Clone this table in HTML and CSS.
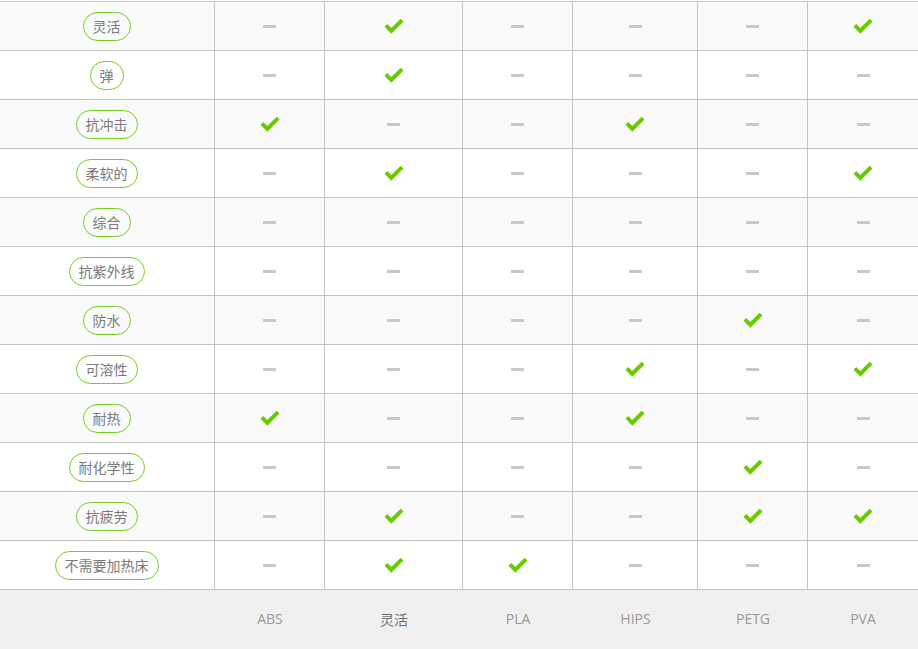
FILE: index.html
```html
<!DOCTYPE html>
<html lang="zh">
<head>
<meta charset="utf-8">
<link rel="stylesheet" href="styles.css">
<title>材料对比</title>
</head>
<body>
<svg width="0" height="0" class="defs">
  <defs>
    <symbol id="chk" viewBox="0 0 20 15">
      <path d="M0.5 7.8 L3.3 5 L7.3 9 L16.7 -0.3 L19.5 2.5 L7.3 14.7 Z" fill="#66cc00"/>
    </symbol>
  </defs>
</svg>
<div class="table" id="t"></div>
<script src="app.js"></script>
</body>
</html>
```

FILE: app.js
```js
const rows = [
  ["灵活", "-y---y"],
  ["弹", "-y----"],
  ["抗冲击", "y--y--"],
  ["柔软的", "-y---y"],
  ["综合", "------"],
  ["抗紫外线", "------"],
  ["防水", "----y-"],
  ["可溶性", "---y-y"],
  ["耐热", "y--y--"],
  ["耐化学性", "----y-"],
  ["抗疲劳", "-y--yy"],
  ["不需要加热床", "-yy---"]
];
const heads = ["ABS", "灵活", "PLA", "HIPS", "PETG", "PVA"];
const t = document.getElementById("t");
let html = "";
rows.forEach((r, i) => {
  html += '<div class="row ' + (i % 2 === 0 ? "odd" : "even") + '">';
  html += '<div class="cell name"><span class="pill">' + r[0] + '</span></div>';
  for (const c of r[1]) {
    if (c === "y") {
      html += '<div class="cell"><svg class="check" viewBox="0 0 20 15"><use href="#chk"/></svg></div>';
    } else {
      html += '<div class="cell"><span class="dash"></span></div>';
    }
  }
  html += "</div>";
});
html += '<div class="row foot"><div class="cell"></div>';
heads.forEach((h, i) => {
  html += '<div class="cell"><span class="' + (i === 1 ? "fh cn" : "fh") + '">' + h + "</span></div>";
});
html += "</div>";
t.innerHTML = html;
```

FILE: styles.css
```css
* { box-sizing: border-box; }
html, body { margin: 0; padding: 0; background: #fff; }
body {
  font-family: "Open Sans", "Noto Sans CJK SC", sans-serif;
  padding-top: 1px;
}
.defs { position: absolute; }
.table {
  border-top: 1px solid #c4c4c4;
  width: 918px;
}
.row {
  display: grid;
  grid-template-columns: 215px 110px 138px 110px 125px 110px 1fr;
  height: 49px;
}
.row.odd { background: #fafafa; }
.row.even { background: #fff; }
.cell {
  display: flex;
  align-items: center;
  justify-content: center;
  border-right: 1px solid #c4c4c4;
  border-bottom: 1px solid #c4c4c4;
}
.cell:last-child { border-right: none; }
.row .cell.name { padding-right: 1px; }
.pill {
  display: inline-flex;
  align-items: center;
  height: 29px;
  padding: 0 9px;
  border: 1px solid #77cc22;
  border-radius: 15px;
  font-family: "Noto Sans CJK SC", sans-serif;
  font-size: 14px;
  color: #7a7a7a;
  line-height: 1;
}
.check { width: 20px; height: 15px; display: block; }
.dash {
  display: block;
  width: 13px;
  height: 3px;
  background: #c8c8c8;
}
.row.foot {
  height: 59px;
  background: #f0f0f0;
}
.row.foot .cell { border: none; padding-bottom: 2px; }
.fh {
  font-size: 14px;
  color: #9a9a9a;
  font-family: "Open Sans", sans-serif;
}
.fh.cn { font-family: "Noto Sans CJK SC", sans-serif; color: #707070; }
```
